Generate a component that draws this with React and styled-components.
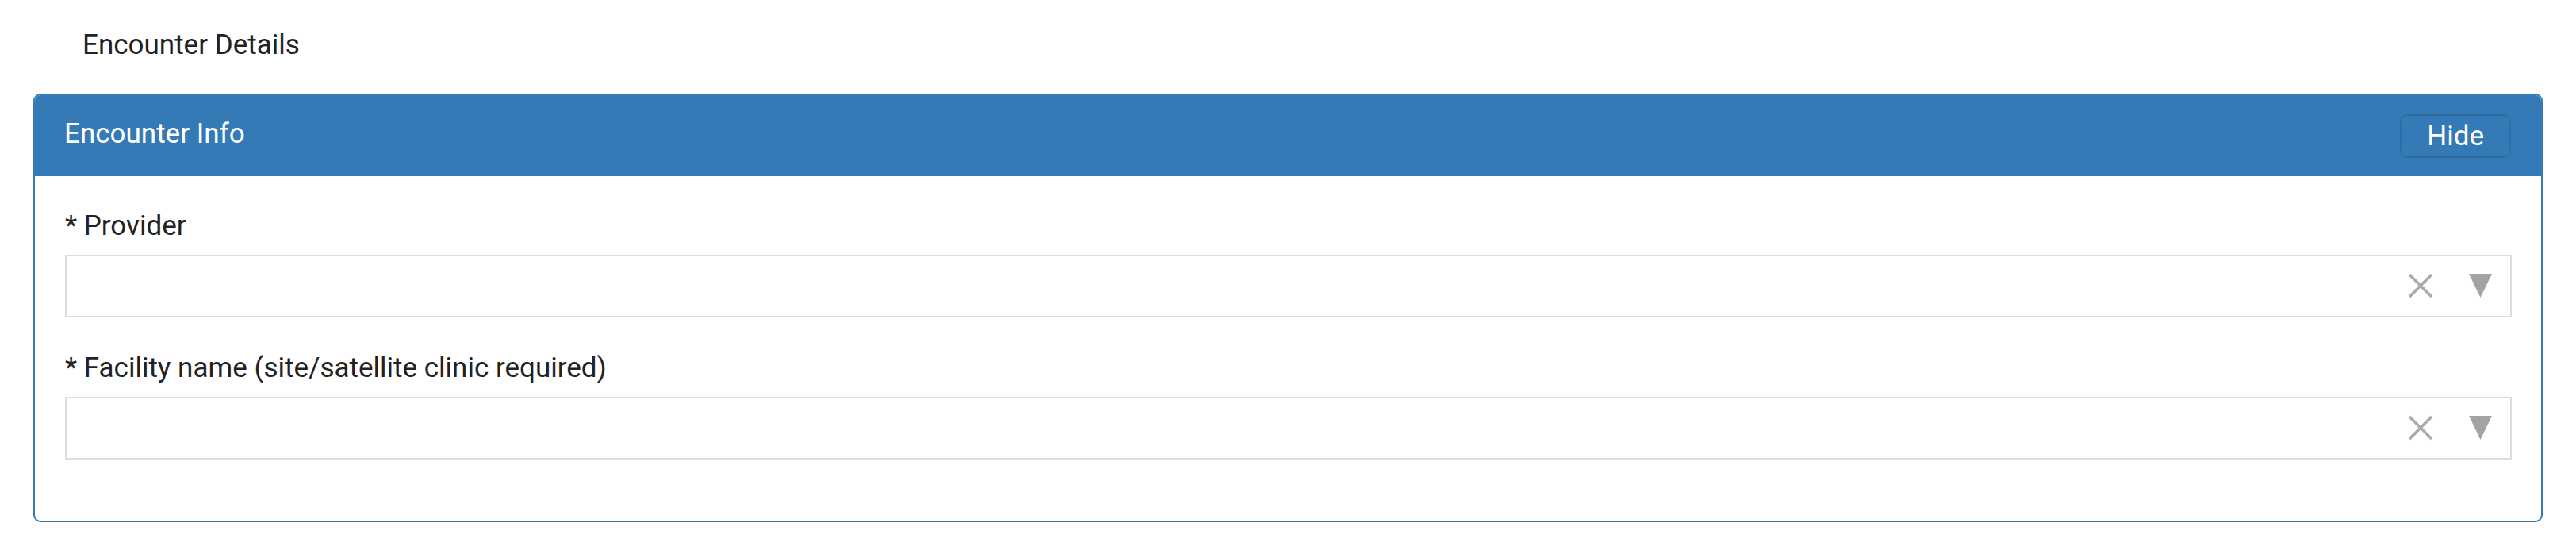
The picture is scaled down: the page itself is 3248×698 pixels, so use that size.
import React from 'react';
import styled, { createGlobalStyle } from 'styled-components';

const GlobalStyle = createGlobalStyle`
  body {
    margin: 0;
    background: #fff;
    font-family: Roboto, "Liberation Sans", Arial, sans-serif;
    color: #222;
  }
`;

const fields = [
  { id: 'provider', label: '* Provider' },
  { id: 'facility', label: '* Facility name (site/satellite clinic required)' },
];

const ClearIcon = () => (
  <svg width="32" height="32" viewBox="0 0 32 32">
    <path d="M2 2 L30 30 M30 2 L2 30" stroke="#aaaaaa" strokeWidth="3.6" fill="none" />
  </svg>
);

const CaretIcon = () => (
  <svg width="29" height="30" viewBox="0 0 29 30">
    <polygon points="0,0 29,0 14.5,30" fill="#a3a3a3" />
  </svg>
);

const SelectField = ({ label }) => (
  <StGroup>
    <StLabel>{label}</StLabel>
    <StSelect>
      <StValue />
      <StIcons>
        <ClearIcon />
        <CaretIcon />
      </StIcons>
    </StSelect>
  </StGroup>
);

const App = () => {
  return (
    <>
      <GlobalStyle />
      <StPage>
        <StPageTitle>Encounter Details</StPageTitle>
        <StPanel>
          <StPanelHeading>
            <StPanelTitle>Encounter Info</StPanelTitle>
            <StHideButton type="button">Hide</StHideButton>
          </StPanelHeading>
          <StPanelBody>
            {fields.map((f) => (
              <SelectField key={f.id} label={f.label} />
            ))}
          </StPanelBody>
        </StPanel>
      </StPage>
    </>
  );
};

export default App;

const StPage = styled.div`
  padding: 37px 42px 0;
`;

const StPageTitle = styled.div`
  font-size: 35px;
  line-height: 40px;
  color: #222;
  padding-left: 62px;
  margin-bottom: 41px;
`;

const StPanel = styled.section`
  border: 2px solid #337ab7;
  border-radius: 9px;
  overflow: hidden;
  background: #fff;
`;

const StPanelHeading = styled.div`
  height: 102px;
  box-sizing: border-box;
  background-color: #337ab7;
  display: flex;
  align-items: center;
  justify-content: space-between;
  padding: 0 38px 0 37px;
`;

const StPanelTitle = styled.h3`
  margin: 0 0 4px;
  font-size: 35px;
  line-height: 36px;
  font-weight: 400;
  color: #fff;
`;

const StHideButton = styled.button`
  height: 55px;
  padding: 0 32px;
  border: 2px solid #2e6da4;
  border-radius: 9px;
  background-color: #337ab7;
  color: #fff;
  font-family: inherit;
  font-size: 35px;
  line-height: 1;
  cursor: pointer;
`;

const StPanelBody = styled.div`
  display: flex;
  flex-direction: column;
  gap: 44px;
  padding: 43px 37px 77px 38px;
`;

const StGroup = styled.div`
  display: flex;
  flex-direction: column;
  gap: 16px;
`;

const StLabel = styled.label`
  font-size: 35px;
  line-height: 40px;
  color: #222;
`;

const StSelect = styled.div`
  height: 79px;
  box-sizing: border-box;
  border: 2px solid #dddddd;
  display: flex;
  align-items: center;
  padding: 0 23px 0 12px;
`;

const StValue = styled.div`
  flex: 1;
`;

const StIcons = styled.div`
  display: flex;
  align-items: center;
  gap: 45px;
  margin-top: -2px;
`;
